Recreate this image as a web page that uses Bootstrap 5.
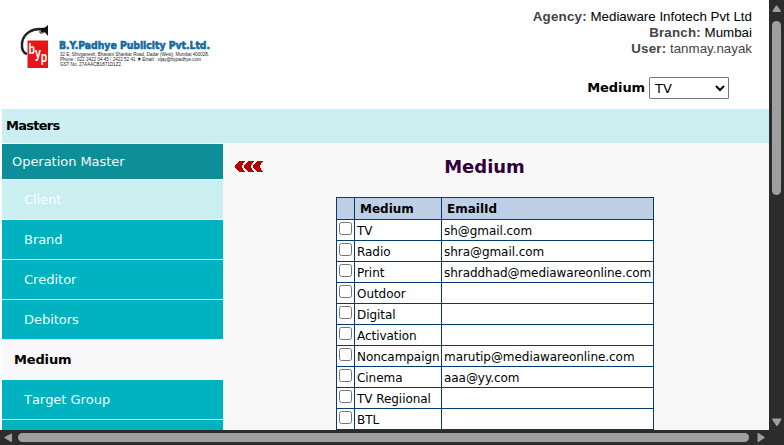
<!DOCTYPE html>
<html lang="en">
<head>
<meta charset="utf-8">
<title>Medium</title>
<link href="https://cdn.jsdelivr.net/npm/bootstrap@5.3.0/dist/css/bootstrap.min.css" rel="stylesheet">
<style>
html,body{height:445px;overflow:hidden}
body{font:13px/16px "DejaVu Sans",sans-serif;color:#000;background:#fff}
.app{width:784px;height:445px;display:grid;grid-template:430px 15px/769px 15px}
.pane{height:430px;padding-left:2px}
.top-area{height:109px;padding:9px 17px 0 18px}
.brand-logo{width:200px;height:50px;margin-top:14px;overflow:visible}
.account{font:13.33px/16px "Liberation Sans",sans-serif;text-align:right}
.account b{color:#444;font-weight:700;letter-spacing:.2px}
.account .user-name{color:#444}
.picker{margin:20px 23px 0 0;gap:4px;font-size:13px}
.picker b{letter-spacing:-.1px}
.picker select{width:80px;height:22px;border:1px solid #767676;border-radius:1px;background:#fff;font:13px "DejaVu Sans",sans-serif;padding:0 0 0 1px;color:#000}
.masters{height:34px;background:#cbeff1;padding:0 4px;font-size:13px}
.masters b{letter-spacing:-.75px}
.lower{height:287px;background:#f8f8f8}
.side{width:221px;font-size:13px;letter-spacing:-.04px;font-kerning:none;color:#f1fbfa;border-top:1px solid #f3fbfb}
.side .group-head{height:36px;padding-left:10px;background:#0d8e98}
.side a{height:40px;flex:none;padding-left:22px;background:#00b2bf;color:#f1fbfa;text-decoration:none}
.side .group-head,.side a{border-bottom:1px solid #f3fbfb}
.side a.hovered{background:#cbeff1;color:#f8ffff}
.side a.current{background:#f8f8f8;color:#000;padding-left:12px;font-weight:bold;letter-spacing:-.15px}
.back{width:29px;height:11px;margin:18px 0 0 12px}
.content-col{margin-left:72px;width:318px}
h1{font:bold 18px/24px "DejaVu Sans",sans-serif;color:#33003a;margin:12px 0 18px -21px;text-align:center}
.grid-list{table-layout:fixed;width:318px;border-collapse:collapse;background:#fff;font-size:12px}
.grid-list th,.grid-list td{border:1px solid #003c73;padding:1px 0 0 2px;height:21px;line-height:16px;white-space:nowrap}
.grid-list td{letter-spacing:-.05px}
.grid-list th{background:#bfcfe6;height:22px;padding:0 0 0 5px;font-size:12px}
.grid-list td:first-child{vertical-align:top;padding:2px 0 0 2px;line-height:0}
.grid-list input{width:13px;height:13px;margin:0;display:block}
.bars{background:#2c2c2c}
</style>
</head>
<body>
<div class="app">
<main class="pane overflow-hidden">
<header class="top-area d-flex justify-content-between">
<svg class="brand-logo" viewBox="20 23 200 50"><g fill="none" stroke="#222"><path d="M45 29.500C32 27 23 34 22 43C21.500 49 23 53 27 54" stroke-width="2.500"/><path d="M55 29M40 29v4h3v-3" stroke-width="1"/></g><path d="M41 28l4-.5l3-2.500v11l-3-3.500l-4-.5z" fill="#111"/><path d="M27.500 40.500H48V68H27.500z" fill="#e91418"/><text fill="#fff" font-family="Liberation Sans" font-weight="bold" font-size="14" transform="translate(28.500 54) scale(.75 1)" dy="0 4 4">byp</text>
<text x="59" y="48.500" font-family="DejaVu Sans" font-weight="bold" font-size="9.800" fill="#126b9e" stroke="#126b9e" stroke-width=".6" textLength="151" lengthAdjust="spacingAndGlyphs">B.Y.Padhye Publicity Pvt.Ltd.</text>
<g font-family="Liberation Sans" font-size="5.500" fill="#222"><text x="60" y="55.500" textLength="149" lengthAdjust="spacingAndGlyphs">32 E, Shivganesh, Bhavani Shankar Road, Dadar (West), Mumbai 400028.</text><text x="60" y="60.500" textLength="141" lengthAdjust="spacingAndGlyphs">Phone : 022 2422 04 45 / 2422 52 41 ★ Email : vijay@bypadhye.com</text><text x="60" y="65.500" textLength="61" lengthAdjust="spacingAndGlyphs">GST No. 27AAACB1871D1Z2</text></g></svg>
<div class="d-flex flex-column">
<div class="account"><div><b>Agency:</b> Mediaware Infotech Pvt Ltd</div><div><b>Branch:</b> Mumbai</div><div class="user-name"><b>User:</b> tanmay.nayak</div></div>
<label class="picker d-flex align-items-center justify-content-end"><b>Medium</b><select><option>TV</option></select></label>
</div>
</header>
<div class="masters d-flex align-items-center"><b>Masters</b></div>
<div class="lower d-flex align-items-start overflow-hidden">
<nav class="side d-flex flex-column">
<div class="group-head d-flex align-items-center">Operation Master</div>
<a href="#" class="hovered d-flex align-items-center">Client</a>
<a href="#" class="d-flex align-items-center">Brand</a>
<a href="#" class="d-flex align-items-center">Creditor</a>
<a href="#" class="d-flex align-items-center">Debitors</a>
<a href="#" class="current d-flex align-items-center">Medium</a>
<a href="#" class="d-flex align-items-center">Target Group</a>
<a href="#" class="d-flex align-items-center"></a>
</nav>
<svg class="back flex-shrink-0" viewBox="0 0 29 11" fill="#b80000"><path id="chev" d="M4 0h6v1H9v1H8v2H7v3h1v2h1v1h1v1H4v-1H3V9H2V8H1V7H0V4h1V3h1V2h1V1h1z"/><use href="#chev" x="9"/><use href="#chev" x="18"/></svg>
<section class="content-col">
<h1>Medium</h1>
<table class="grid-list">
<colgroup><col style="width:18px"><col style="width:87px"><col></colgroup>
<thead><tr><th></th><th>Medium</th><th>EmailId</th></tr></thead>
<tbody>
<tr><td><input type="checkbox"></td><td>TV</td><td>sh@gmail.com</td></tr>
<tr><td><input type="checkbox"></td><td>Radio</td><td>shra@gmail.com</td></tr>
<tr><td><input type="checkbox"></td><td>Print</td><td>shraddhad@mediawareonline.com</td></tr>
<tr><td><input type="checkbox"></td><td>Outdoor</td><td></td></tr>
<tr><td><input type="checkbox"></td><td>Digital</td><td></td></tr>
<tr><td><input type="checkbox"></td><td>Activation</td><td></td></tr>
<tr><td><input type="checkbox"></td><td>Noncampaign</td><td>marutip@mediawareonline.com</td></tr>
<tr><td><input type="checkbox"></td><td>Cinema</td><td>aaa@yy.com</td></tr>
<tr><td><input type="checkbox"></td><td>TV Regiional</td><td></td></tr>
<tr><td><input type="checkbox"></td><td>BTL</td><td></td></tr>
</tbody>
</table>
</section>
</div>
</main>
<svg class="bars" width="15" height="430" fill="#9f9f9f"><path d="M3.500 11L7 5.500h1L12 11q0 1-1 1H4.500q-1 0-1-1z"/><rect x="3" y="21" width="9" height="174" rx="4.500"/><path d="M3 419.500q0-1 1-1h7.500q1 0 1 1L8.500 426h-1z"/></svg>
<svg class="bars" width="769" height="15" fill="#9f9f9f"><path d="M11.500 3.500q.5-.5.500 0v8q0 .8-.8.500L4.500 8V7z"/><rect x="18" y="3" width="731" height="9" rx="4.500"/><path d="M757.500 3.500q0-.8 1-.5L764.500 7v1L758.500 12q-1 .5-1-.5z"/></svg>
<div class="bars"></div>
</div>
<script src="https://cdn.jsdelivr.net/npm/bootstrap@5.3.0/dist/js/bootstrap.bundle.min.js"></script>
</body>
</html>
